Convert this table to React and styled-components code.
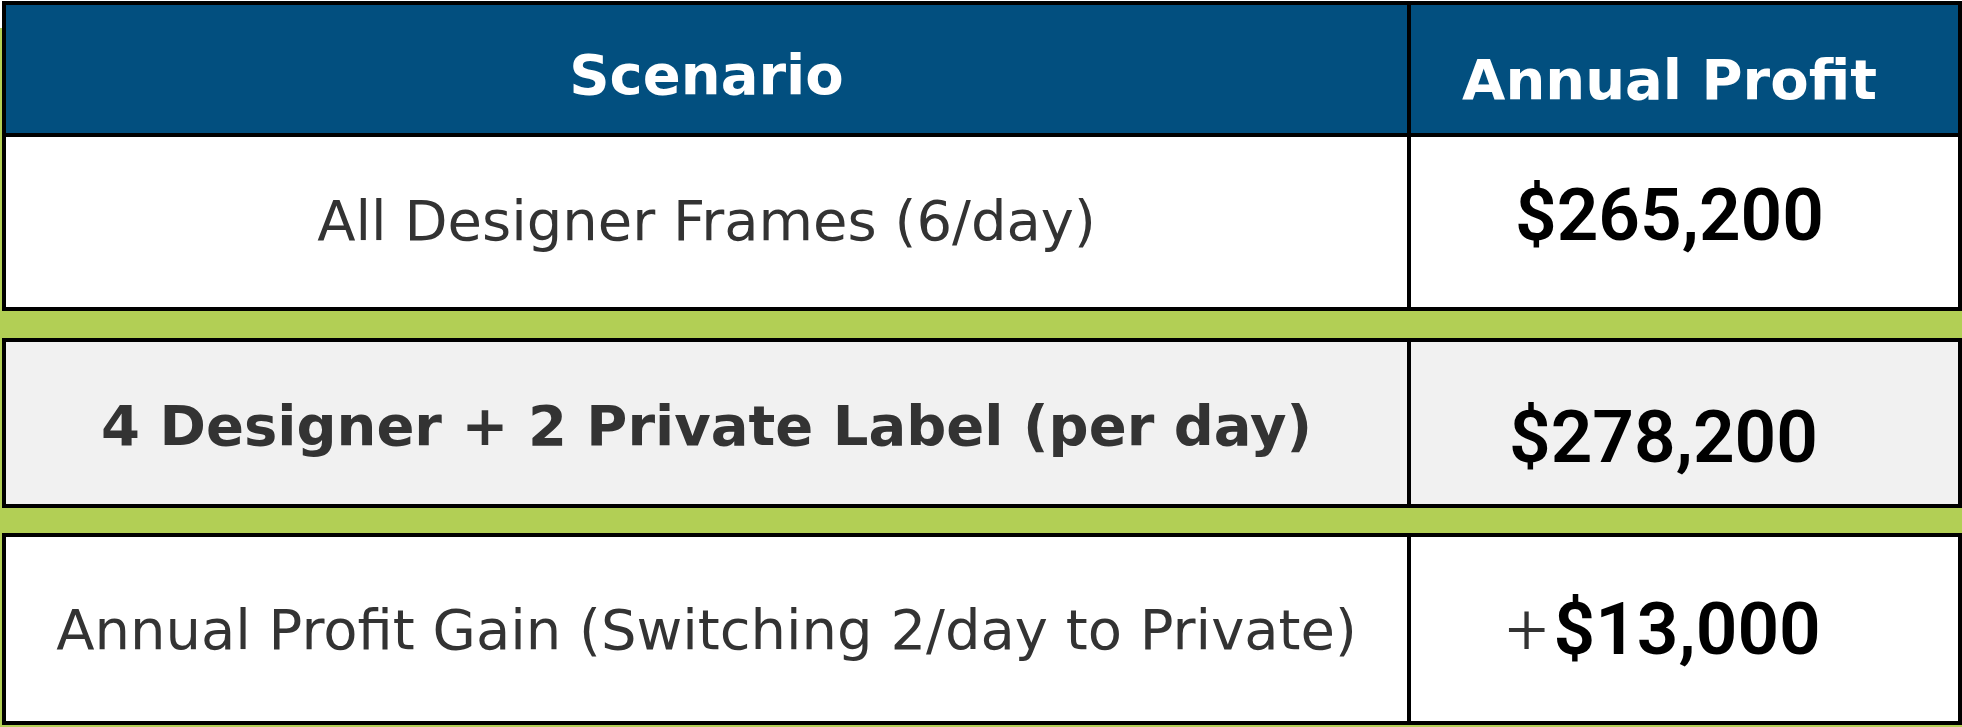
import React from 'react';
import styled, { createGlobalStyle } from 'styled-components';

const Global = createGlobalStyle`
  html, body { margin: 0; padding: 0; background: #ffffff; }
  body { width: 1962px; height: 727px; overflow: hidden; }
`;

const Page = styled.div`
  width: 1962px;
  height: 727px;
  box-sizing: border-box;
  padding: 1px 0 0 2px;
  background: linear-gradient(to bottom, #ffffff 0 28px, #b2cf55 28px);
  display: flex;
  flex-direction: column;
`;

const Block = styled.div`
  border: 4px solid #000;
  margin-top: ${p => p.$gap || 0}px;
  display: grid;
  grid-template-columns: 1401px 551px;
`;

const Cell = styled.div`
  box-sizing: border-box;
  height: ${p => p.$h}px;
  display: flex;
  align-items: center;
  justify-content: center;
  background: ${p => (p.$tone === 'head' ? '#024f7f' : p.$tone === 'gray' ? '#f1f1f1' : '#ffffff')};
  border-left: ${p => (p.$divider ? '4px solid #000' : 'none')};
  border-bottom: ${p => (p.$rule ? '4px solid #000' : 'none')};
  padding: ${p => p.$pt || 0}px ${p => p.$pr ?? (p.$divider ? 30 : 0)}px ${p => p.$pb || 0}px 0;
`;

const HeadText = styled.span`
  font-family: 'DejaVu Sans', sans-serif;
  font-weight: 700;
  font-size: 56px;
  color: #ffffff;
  white-space: nowrap;
`;

const Label = styled.span`
  font-family: 'DejaVu Sans', sans-serif;
  font-weight: ${p => (p.$bold ? 700 : 400)};
  font-size: 56px;
  color: #333333;
  white-space: nowrap;
`;

const Amount = styled.span`
  font-family: Roboto, 'Liberation Sans', sans-serif;
  font-weight: 600;
  font-size: 73px;
  color: #000000;
  white-space: nowrap;
`;

const Plus = styled.span`
  font-weight: 300;
  color: #333333;
  margin-right: 6px;
`;

export default function App() {
  return (
    <>
      <Global />
      <Page>
        <Block>
          <Cell $tone="head" $h={132} $rule $pt={10}>
            <HeadText>Scenario</HeadText>
          </Cell>
          <Cell $tone="head" $h={132} $rule $divider $pt={20}>
            <HeadText>Annual Profit</HeadText>
          </Cell>
          <Cell $h={170} $pb={4}>
            <Label>All Designer Frames (6/day)</Label>
          </Cell>
          <Cell $h={170} $divider $pb={14}>
            <Amount>$265,200</Amount>
          </Cell>
        </Block>
        <Block $gap={27}>
          <Cell $tone="gray" $h={162} $pt={4}>
            <Label $bold>4 Designer + 2 Private Label (per day)</Label>
          </Cell>
          <Cell $tone="gray" $h={162} $divider $pr={42} $pt={28}>
            <Amount>$278,200</Amount>
          </Cell>
        </Block>
        <Block $gap={25}>
          <Cell $h={184}>
            <Label>Annual Profit Gain (Switching 2/day to Private)</Label>
          </Cell>
          <Cell $h={184} $divider $pr={42}>
            <Amount>
              <Plus>+</Plus>$13,000
            </Amount>
          </Cell>
        </Block>
      </Page>
    </>
  );
}
